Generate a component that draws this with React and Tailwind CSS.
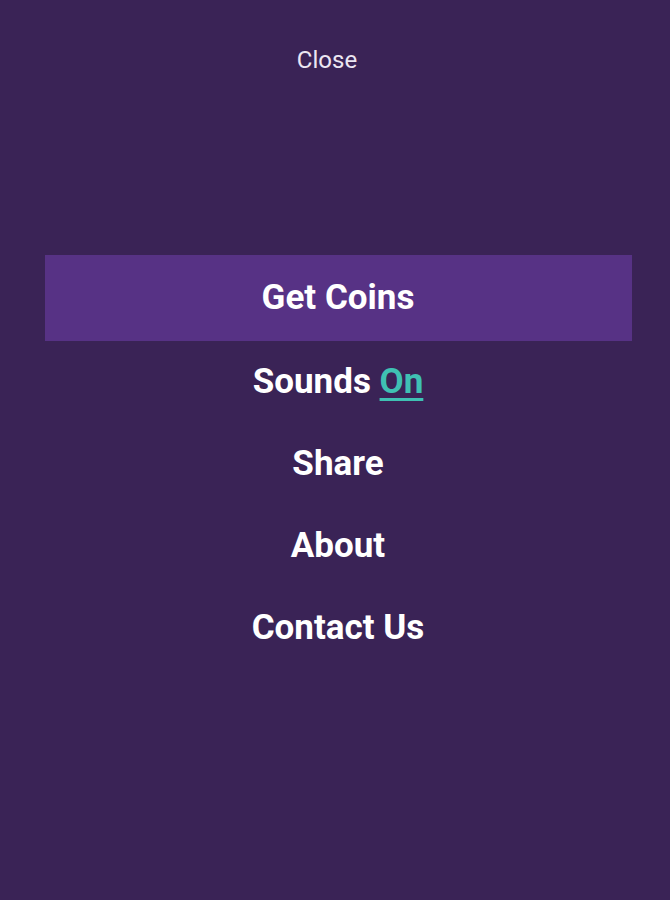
export default function App() {
  const items = ['Share', 'About', 'Contact Us']
  return (
    <div
      className="w-[670px] h-[900px] bg-[#3a2356] text-white flex flex-col items-center pl-[6px]"
      style={{ fontFamily: 'Roboto, "Noto Sans", sans-serif' }}
    >
      <div className="mt-[44px] mr-[22px] h-[32px] flex items-center text-[24px] text-[#ece6f2]">Close</div>

      <div className="mt-[179px] w-[587px] h-[86px] bg-[#573285] flex items-center justify-center text-[35px] font-bold">
        Get Coins
      </div>

      <div className="h-[82px] flex items-center justify-center text-[35px] font-bold">
        Sounds&nbsp;<span className="text-[#3fc1b3] underline underline-offset-[5px] decoration-[3px]">On</span>
      </div>

      {items.map((t) => (
        <div key={t} className="h-[82px] flex items-center justify-center text-[35px] font-bold">
          {t}
        </div>
      ))}
    </div>
  )
}
